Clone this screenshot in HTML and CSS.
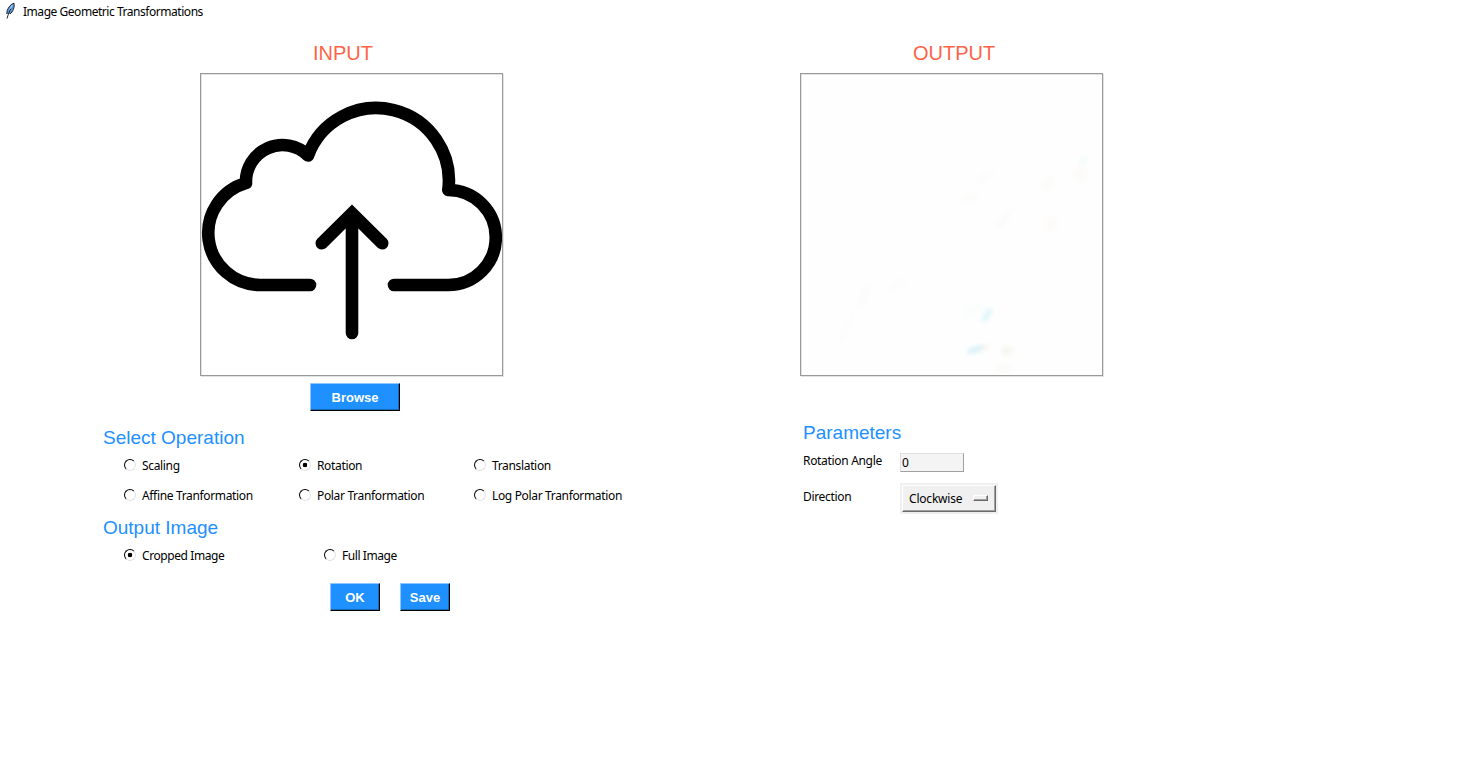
FILE: index.html
```html
<!DOCTYPE html>
<html lang="en">
<head>
<meta charset="utf-8">
<title>Image Geometric Transformations</title>
<link rel="stylesheet" href="styles.css">
</head>
<body>
<header class="titlebar">
  <svg class="feather" width="12" height="18" viewBox="0 0 12 18">
    <path d="M9 1.200C6 2 3.500 5 2.200 8.500L1.800 12 5 12C8 9.500 9.800 5.500 9 1.200Z" fill="#5c9ae6"/>
    <path d="M9 1.200C6 2 3.500 5 2.200 8.500L1.800 12M5 12C8 9.500 9.800 5.500 9 1.200" fill="none" stroke="#222" stroke-width="1"/>
    <path d="M6 6.500C4.500 9 3 13 2 16.500" fill="none" stroke="#222" stroke-width="1"/>
    <path d="M7.500 3L4.500 7.500" stroke="#a9cdf7" stroke-width="1"/>
  </svg>
  <span class="app-name">Image Geometric Transformations</span>
</header>
<main class="workspace">
  <section class="source">
    <h1 class="caption">INPUT</h1>
    <div class="frame">
      <svg width="301" height="301" viewBox="201 74 301 301" fill="none" stroke="#000" stroke-width="12.600" stroke-linecap="round">
        <path stroke-linejoin="round" d="M310 285H260A52 52 0 0 1 246 183A36.500 36.500 0 0 1 308 155.500A72.700 72.700 0 0 1 448.300 190A47.500 47.500 0 0 1 448.300 285H394"/>
        <path d="M352 333V214M321.800 243.300L352 213.300L382.200 243.300"/>
      </svg>
    </div>
    <button class="btn browse">Browse</button>
    <h2 class="heading">Select Operation</h2>
    <div class="options operations">
      <label class="option"><i class="radio"></i><span>Scaling</span></label>
      <label class="option"><i class="radio on"></i><span>Rotation</span></label>
      <label class="option"><i class="radio"></i><span>Translation</span></label>
      <label class="option"><i class="radio"></i><span>Affine Tranformation</span></label>
      <label class="option"><i class="radio"></i><span>Polar Tranformation</span></label>
      <label class="option"><i class="radio"></i><span>Log Polar Tranformation</span></label>
    </div>
    <h2 class="heading">Output Image</h2>
    <div class="options outputs">
      <label class="option"><i class="radio on"></i><span>Cropped Image</span></label>
      <label class="option"><i class="radio"></i><span>Full Image</span></label>
    </div>
    <div class="actions">
      <button class="btn">OK</button>
      <button class="btn">Save</button>
    </div>
  </section>
  <section class="result">
    <h1 class="caption">OUTPUT</h1>
    <div class="frame">
      <svg width="301" height="301" viewBox="801 74 301 301">
        <defs><filter id="soft" x="-100%" y="-100%" width="300%" height="300%" color-interpolation-filters="sRGB"><feGaussianBlur stdDeviation="2"/></filter></defs>
        <rect x="801" y="74" width="301" height="301" fill="#fefefe"/>
        <g filter="url(#soft)">
          <ellipse cx="987" cy="315" rx="3" ry="8" transform="rotate(32 987 315)" fill="#dcf5fa"/>
          <ellipse cx="976" cy="349.500" rx="10" ry="3" transform="rotate(-18 976 349.500)" fill="#d4f1f8"/>
          <ellipse cx="985" cy="348" rx="4" ry="2" transform="rotate(-18 985 348)" fill="#fbf0ea"/>
          <ellipse cx="1007" cy="351" rx="6" ry="5" fill="#f7f6f1"/>
          <ellipse cx="1004" cy="368" rx="8" ry="4" fill="#fbfaf8"/>
          <ellipse cx="974" cy="309" rx="12" ry="6" transform="rotate(-28 974 309)" fill="#fbfdfc"/>
          <ellipse cx="1083" cy="161" rx="5" ry="3" transform="rotate(-35 1083 161)" fill="#f2fbfb"/>
          <ellipse cx="1080" cy="174" rx="7" ry="7" fill="#fcfbf9"/>
          <ellipse cx="1048" cy="183" rx="3" ry="8" transform="rotate(38 1048 183)" fill="#fbfaf8"/>
          <ellipse cx="1051" cy="224" rx="6" ry="7" transform="rotate(30 1051 224)" fill="#fcfbf9"/>
          <ellipse cx="985" cy="177" rx="10" ry="3" transform="rotate(-32 985 177)" fill="#fbfbfb"/>
          <ellipse cx="970" cy="198" rx="8" ry="3" transform="rotate(-12 970 198)" fill="#fbfbf9"/>
          <ellipse cx="1004" cy="219" rx="2" ry="11" transform="rotate(38 1004 219)" fill="#faf9f8"/>
          <ellipse cx="864" cy="296" rx="3" ry="12" transform="rotate(20 864 296)" fill="#fbfaf9"/>
          <ellipse cx="847" cy="326" rx="2" ry="16" transform="rotate(28 847 326)" fill="#fbfbfb"/>
          <ellipse cx="898" cy="284" rx="10" ry="2" transform="rotate(-32 898 284)" fill="#fbfbfb"/>
        </g>
      </svg>
    </div>
    <h2 class="heading">Parameters</h2>
    <div class="params">
      <span class="label">Rotation Angle</span>
      <div class="entry">0</div>
      <span class="label direction">Direction</span>
      <div class="menu"><div class="menu-face"><span>Clockwise</span><i class="indicator"></i></div></div>
    </div>
  </section>
</main>
</body>
</html>
```
FILE: styles.css
```css
* { box-sizing: border-box; }
body {
  margin: 0;
  background: #fff;
  color: #000;
  font: 12px/20px "Noto Sans", sans-serif;
  white-space: nowrap;
}
h1, h2 { margin: 0; font-weight: 400; }
.titlebar { display: flex; height: 24px; padding: 2px 0 0 5px; }
.feather { display: block; margin-right: 6px; }
.app-name { letter-spacing: -0.460px; }
.workspace { display: flex; }
.source { width: 800px; }
.result { width: 684px; }
.caption, .heading { font-family: "Liberation Sans", Arial, sans-serif; }
.caption {
  height: 49px;
  padding-top: 16px;
  font-size: 20px;
  line-height: 26px;
  color: #ff6347;
}
.source .caption { padding-left: 313px; }
.result .caption { padding-left: 113px; }
.frame {
  width: 303px;
  height: 303px;
  border: 1px solid #999;
  box-shadow: 1px 1px #e3e3e3, inset 1px 1px #e3e3e3;
}
.frame svg { display: block; }
.source .frame { margin-left: 200px; }
.result .frame svg { clip-path: inset(1px 0 0 1px); }
.btn {
  display: block;
  width: 50px;
  height: 28px;
  padding: 1px 0 0;
  border: 1px solid #000;
  border-color: #8ec7ff #000 #000 #8ec7ff;
  box-shadow: inset -1px -1px #1669b5;
  background: #1e90ff;
  color: #fff;
  font: bold 13px/24px "Liberation Sans", Arial, sans-serif;
}
.browse { width: 90px; margin: 7px 0 0 310px; }
.heading {
  height: 24px;
  padding-left: 103px;
  font-size: 19px;
  line-height: 24px;
  color: #1e90ff;
}
.browse + .heading { margin-top: 15px; }
.options { display: grid; padding-left: 124px; grid-auto-rows: 30px; }
.operations {
  height: 66px;
  grid-template-columns: 175px 175px 175px;
  letter-spacing: -0.340px;
}
.outputs {
  height: 42px;
  grid-template-columns: 200px 200px;
  letter-spacing: -0.420px;
}
.option { display: flex; padding-top: 6px; }
.radio {
  width: 12px;
  height: 12px;
  margin: 3px 6px 0 0;
  border: 1.500px solid #e3e3e3;
  border-color: #000 #e3e3e3 #e3e3e3 #000;
  border-radius: 50%;
}
.radio.on { background: radial-gradient(circle, #000 2px, transparent 2.600px); }
.actions { display: flex; gap: 20px; padding: 1px 0 0 330px; }
.result .heading { margin-top: 45px; padding-left: 3px; }
.params {
  display: grid;
  grid-template-columns: 97px 98px;
  grid-template-rows: 39px 31px;
  margin-top: 7px;
  padding-left: 3px;
}
.label { margin-top: -1px; letter-spacing: -0.320px; }
.entry {
  width: 64px;
  height: 19px;
  padding-left: 1px;
  margin-top: 1px;
  border: 1px solid #a0a0a0;
  border-color: #e0e0e0 #a0a0a0 #a0a0a0 #e0e0e0;
  background: #f4f4f4;
  line-height: 18px;
}
.params .direction { margin-top: -4px; }
.menu {
  width: 98px;
  height: 31px;
  padding: 2px;
  margin-top: -8px;
  background: #f0f0f0;
}
.menu-face {
  display: flex;
  align-items: center;
  justify-content: space-between;
  height: 27px;
  padding: 1px 7px 0 6px;
  border: 1px solid #fff;
  border-color: #fff #696969 #696969 #fff;
  box-shadow: inset -1px -1px #a0a0a0;
  letter-spacing: -0.200px;
}
.indicator {
  width: 15px;
  height: 6px;
  margin-top: -2px;
  border: 1px solid #fff;
  border-color: #fff #696969 #696969 #fff;
  box-shadow: inset -1px -1px #a0a0a0;
}
```
